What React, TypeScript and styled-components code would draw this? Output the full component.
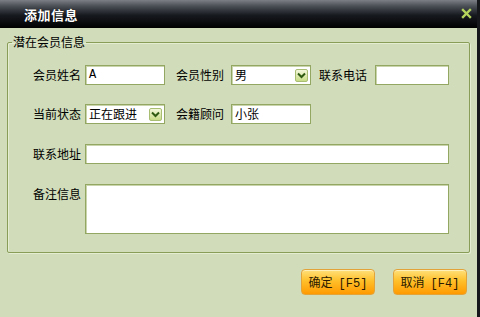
import * as React from "react";
import styled, { createGlobalStyle } from "styled-components";

const GlobalStyle = createGlobalStyle`
  html, body {
    margin: 0;
    padding: 0;
    background: #d0dcba;
  }
  body {
    font-family: "Noto Sans CJK SC", "Liberation Sans", sans-serif;
    font-size: 12px;
    color: #000;
  }
`;

const Window = styled.div`
  width: 480px;
  height: 317px;
  display: flex;
  flex-direction: column;
  background: #d0dcba;
  box-sizing: border-box;
  border-right: 3px solid #15171a;
  overflow: hidden;
`;

const TitleBar = styled.div`
  height: 28px;
  flex: none;
  display: flex;
  align-items: center;
  padding: 0 3px 0 24px;
  background: linear-gradient(#7c7f85 0, #4a4e55 22%, #16191e 55%, #000 100%);
  margin-right: -3px;
`;

const Title = styled.div`
  color: #fff;
  font-size: 13px;
  font-weight: bold;
  letter-spacing: 0.5px;
  text-shadow: 0 0 1px #000;
`;

const CloseButton = styled.div`
  margin-left: auto;
  width: 11px;
  height: 11px;
  margin-right: 5px;
  margin-top: -2px;
  display: flex;
  cursor: pointer;
`;

const Body = styled.div`
  flex: 1;
  display: flex;
  flex-direction: column;
  padding: 6px 7px 0 7px;
`;

const Group = styled.fieldset`
  margin: 0;
  padding: 0 4px 18px 4px;
  border: 1px solid #8a9d58;
  border-radius: 2px;
  box-shadow: inset 1px 1px 0 #e4ecd2, 1px 1px 0 #e4ecd2;
`;

const Legend = styled.legend`
  padding: 0 1px;
  font-size: 12px;
  line-height: 16px;
  color: #000;
`;

const Form = styled.div`
  display: flex;
  flex-direction: column;
  gap: 19px;
  padding: 15px 0 0 21px;
`;

const Row = styled.div<{ $top?: boolean; $gap?: number }>`
  display: flex;
  align-items: ${(p) => (p.$top ? "flex-start" : "center")};
  margin-top: ${(p) => p.$gap ?? 0}px;
`;

const Label = styled.label<{ $w: number; $ml?: number }>`
  width: ${(p) => p.$w}px;
  margin-left: ${(p) => p.$ml ?? 0}px;
  flex: none;
  white-space: nowrap;
  line-height: 20px;
`;

const TextBox = styled.div<{ $w: number; $h?: number }>`
  width: ${(p) => p.$w}px;
  height: ${(p) => p.$h ?? 20}px;
  box-sizing: border-box;
  flex: none;
  background: #fff;
  border: 1px solid #93a662;
  box-shadow: inset 1px 1px 0 #c9d4ad;
  padding: 0 3px;
  line-height: 18px;
  font-size: 12px;
  display: flex;
  align-items: center;
`;

const MonoText = styled.span`
  font-family: "Liberation Mono", "DejaVu Sans Mono", monospace;
  font-size: 12px;
`;

const SelectBox = styled(TextBox)`
  padding-right: 2px;
`;

const SelectValue = styled.span`
  flex: 1;
`;

const ArrowBox = styled.div`
  width: 13px;
  height: 13px;
  box-sizing: border-box;
  border: 1px solid #a8bd72;
  border-radius: 2px;
  background: linear-gradient(#f4f8dc, #c8dc86);
  display: flex;
  align-items: center;
  justify-content: center;
`;

const ButtonBar = styled.div`
  display: flex;
  justify-content: flex-end;
  gap: 18px;
  padding: 16px 3px 0 0;
`;

const Button = styled.button`
  width: 74px;
  height: 26px;
  box-sizing: border-box;
  border: 1px solid #e2a33a;
  border-radius: 4px;
  background: linear-gradient(#ffe07a 0, #ffc02a 45%, #ff9a00 100%);
  box-shadow: inset 0 1px 0 #fff0b8;
  font-family: "Noto Sans CJK SC", "Liberation Sans", sans-serif;
  font-size: 12px;
  color: #2a1a00;
  padding: 0;
  cursor: pointer;
`;

const Key = styled.span`
  font-family: "Liberation Mono", "DejaVu Sans Mono", monospace;
  margin-left: 6px;
`;

const Chevron = () => (
  <svg width="9" height="7" viewBox="0 0 9 7">
    <path d="M1 1.5 L4.5 5 L8 1.5" fill="none" stroke="#2f5a12" strokeWidth="2" />
  </svg>
);

const Select = ({ value, width }: { value: string; width: number }) => (
  <SelectBox $w={width}>
    <SelectValue>{value}</SelectValue>
    <ArrowBox>
      <Chevron />
    </ArrowBox>
  </SelectBox>
);

export default function App() {
  return (
    <Window>
      <GlobalStyle />
      <TitleBar>
        <Title>添加信息</Title>
        <CloseButton>
          <svg width="11" height="11" viewBox="0 0 11 11">
            <path d="M2 2 L9 9 M9 2 L2 9" stroke="#b4d45c" strokeWidth="2.4" strokeLinecap="square" />
          </svg>
        </CloseButton>
      </TitleBar>
      <Body>
        <Group>
          <Legend>潜在会员信息</Legend>
          <Form>
            <Row>
              <Label $w={52}>会员姓名</Label>
              <TextBox $w={80}>
                <MonoText>A</MonoText>
              </TextBox>
              <Label $w={55} $ml={11}>会员性别</Label>
              <Select value="男" width={80} />
              <Label $w={56} $ml={8}>联系电话</Label>
              <TextBox $w={74} />
            </Row>
            <Row>
              <Label $w={52}>当前状态</Label>
              <Select value="正在跟进" width={80} />
              <Label $w={55} $ml={11}>会籍顾问</Label>
              <TextBox $w={80}>小张</TextBox>
            </Row>
            <Row $gap={1}>
              <Label $w={52}>联系地址</Label>
              <TextBox $w={364} />
            </Row>
            <Row $top $gap={1}>
              <Label $w={52}>备注信息</Label>
              <TextBox $w={364} $h={50} />
            </Row>
          </Form>
        </Group>
        <ButtonBar>
          <Button>
            确定<Key>[F5]</Key>
          </Button>
          <Button>
            取消<Key>[F4]</Key>
          </Button>
        </ButtonBar>
      </Body>
    </Window>
  );
}
